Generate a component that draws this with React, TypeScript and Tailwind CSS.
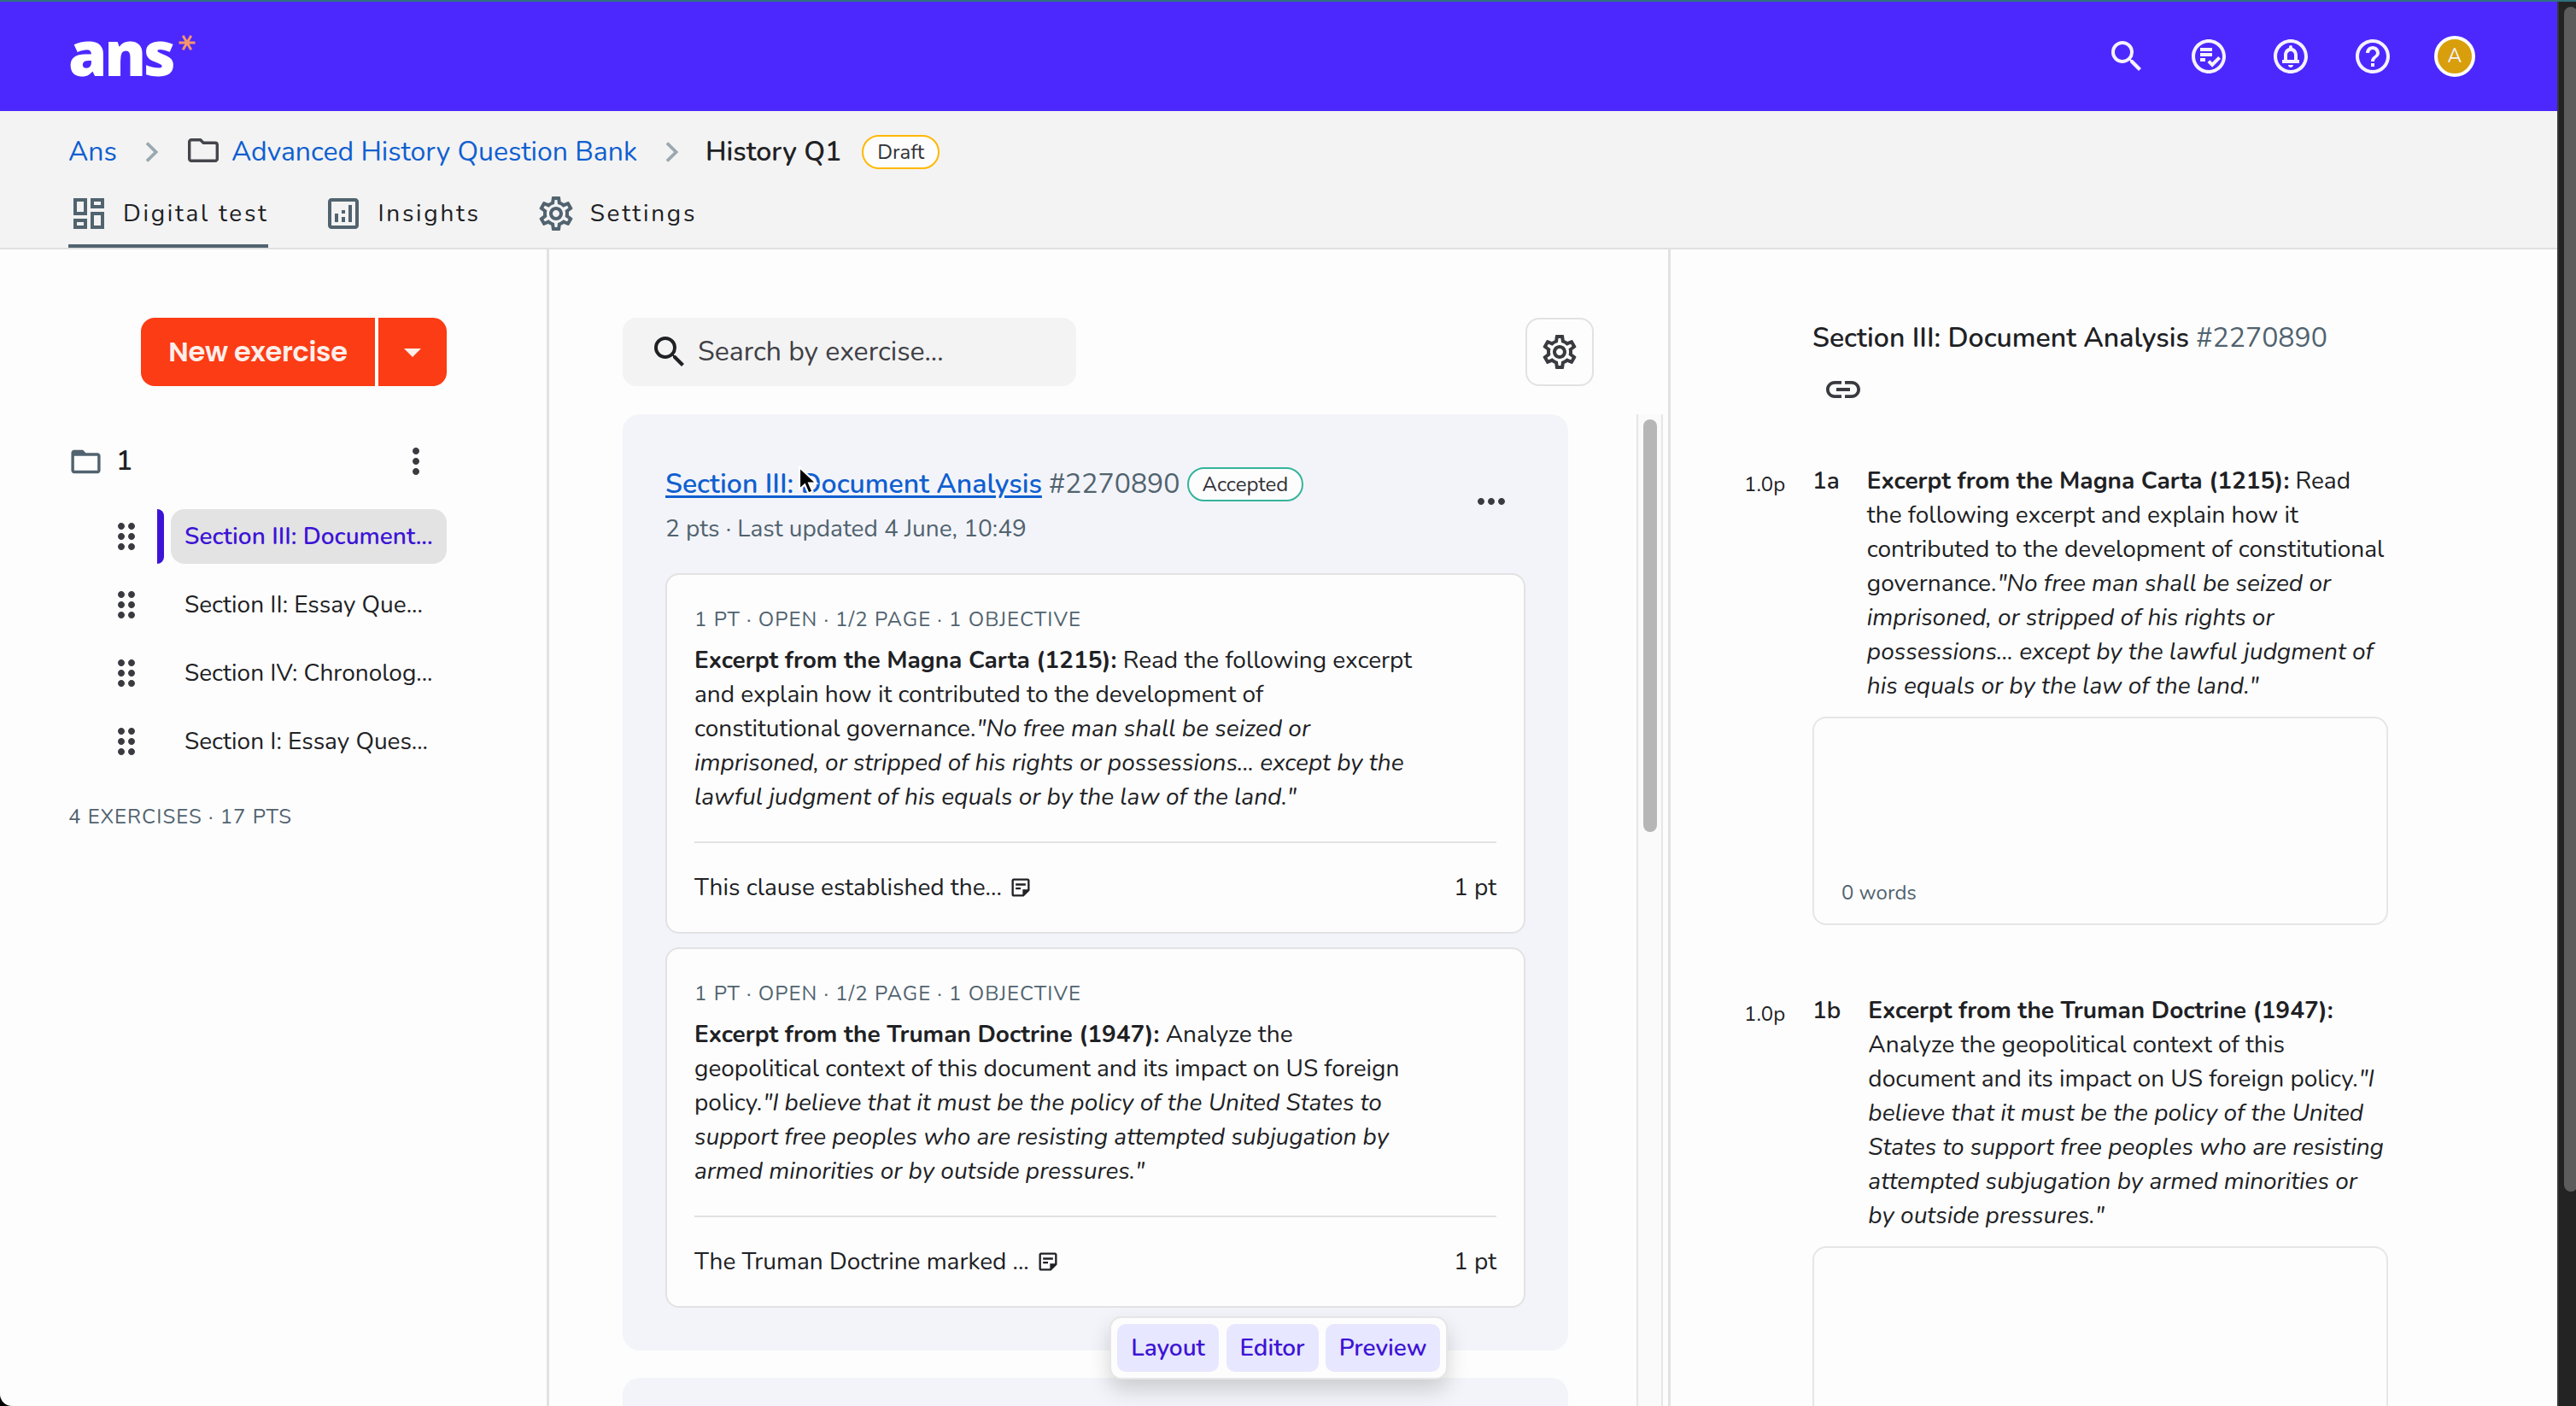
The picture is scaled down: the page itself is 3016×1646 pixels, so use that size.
import type { ReactNode } from "react";
import {
  MdArrowDropDown,
  MdDragIndicator,
  MdFolderOpen,
  MdHelpOutline,
  MdLink,
  MdMoreHoriz,
  MdMoreVert,
  MdOutlineAnalytics,
  MdOutlineCircleNotifications,
  MdOutlineDashboard,
  MdOutlinePlaylistAddCheckCircle,
  MdOutlineSettings,
  MdOutlineStickyNote2,
  MdSearch,
} from "react-icons/md";

const exercises = [
  { title: "Section III: Document...", active: true },
  { title: "Section II: Essay Que...", active: false },
  { title: "Section IV: Chronolog...", active: false },
  { title: "Section I: Essay Ques...", active: false },
];

const questions = [
  {
    label: "1a",
    heading: "Excerpt from the Magna Carta (1215):",
    body: "Read the following excerpt and explain how it contributed to the development of constitutional governance.",
    quote:
      '"No free man shall be seized or imprisoned, or stripped of his rights or possessions... except by the lawful judgment of his equals or by the law of the land."',
    objective: "This clause established the...",
  },
  {
    label: "1b",
    heading: "Excerpt from the Truman Doctrine (1947):",
    body: "Analyze the geopolitical context of this document and its impact on US foreign policy.",
    quote:
      '"I believe that it must be the policy of the United States to support free peoples who are resisting attempted subjugation by armed minorities or by outside pressures."',
    objective: "The Truman Doctrine marked ...",
  },
];

type Question = (typeof questions)[number];

export default function App() {
  return (
    <div className="bg-black">
      <div className="flex h-[1646px] w-[3016px] flex-col overflow-hidden rounded-bl-[14px] bg-[#fdfdfd] font-['Nunito','Lato',sans-serif] text-[28px] leading-[40px] text-[#202124]">
        <div className="h-[2px] shrink-0 bg-[#2f7080]" />
        <div className="flex min-h-0 flex-1">
          <div className="flex w-[2994px] shrink-0 flex-col">
            <Header />
            <SubHeader />
            <div className="flex min-h-0 flex-1">
              <Sidebar />
              <ExerciseColumn />
              <PreviewColumn />
            </div>
          </div>
          {/* Window scrollbar */}
          <div className="w-[22px] overflow-hidden border-l-2 border-[#37373a] bg-[#232324] pl-[6px] pt-[6px]">
            <div className="h-[1387px] w-[16px] rounded-full bg-[#5c5c5c]" />
          </div>
        </div>
      </div>
    </div>
  );
}

function Header() {
  return (
    <header className="flex h-[128px] shrink-0 items-center justify-between bg-[#4c28ff] pl-[80px] pr-[96px] text-[#f5f2ff]">
      <div className="flex items-start">
        <span className="-mt-[11px] font-['Noto_Sans',sans-serif] text-[73px] font-black leading-[80px] tracking-[-3.2px] text-white">
          ans
        </span>
        <svg viewBox="0 0 20 20" className="ml-[6px] mt-[8px] h-[20px] w-[20px]" stroke="#f5956b" strokeWidth="3">
          <path d="M0.5 10h19M5.2 1.8l9.6 16.4M14.8 1.8 5.2 18.2" />
        </svg>
      </div>
      <div className="flex items-center gap-12">
        <MdSearch size={48} />
        <MdOutlinePlaylistAddCheckCircle size={48} />
        <MdOutlineCircleNotifications size={48} />
        <MdHelpOutline size={48} />
        <div className="flex h-[48px] w-[48px] items-center justify-center rounded-full border-4 border-white bg-[#d99e0b] text-[23px]">
          A
        </div>
      </div>
    </header>
  );
}

function Chevron() {
  return (
    <svg viewBox="0 0 16 24" className="h-[24px] w-[16px]" fill="none" stroke="#9aa8b0" strokeWidth="3.8">
      <path d="M2 1.5 12.6 12 2 22.5" />
    </svg>
  );
}

function SubHeader() {
  return (
    <div className="h-[162px] shrink-0 border-b-2 border-[#e0e0e0] bg-[#f3f3f3] pl-[80px]">
      {/* Breadcrumbs */}
      <div className="mt-[24px] flex h-[48px] items-center text-[32px] leading-[48px]">
        <a className="text-[#0f5fd0]">Ans</a>
        <div className="ml-[33px]">
          <Chevron />
        </div>
        <svg
          viewBox="0 0 36 28"
          className="mb-[5px] ml-[34px] h-[28px] w-[36px]"
          fill="none"
          stroke="#45464c"
          strokeWidth="3.4"
        >
          <path d="M4 1.7h10.6l3.6 3.6H32a2.3 2.3 0 0 1 2.3 2.3V24a2.3 2.3 0 0 1-2.3 2.3H4A2.3 2.3 0 0 1 1.7 24V4A2.3 2.3 0 0 1 4 1.7z" />
        </svg>
        <a className="ml-[15px] text-[#0f5fd0]">Advanced History Question Bank</a>
        <div className="ml-[33px]">
          <Chevron />
        </div>
        <span className="ml-[31px] font-semibold">History Q1</span>
        <Badge className="ml-[24px] border-[#ffb800]">Draft</Badge>
      </div>
      {/* Tabs */}
      <div className="mt-[24px] flex gap-16 tracking-[2.7px]">
        <Tab icon={<MdOutlineDashboard size={48} />} label="Digital test" active />
        <Tab icon={<MdOutlineAnalytics size={48} />} label="Insights" />
        <Tab icon={<MdOutlineSettings size={48} />} label="Settings" />
      </div>
    </div>
  );
}

function Tab({ icon, label, active }: { icon: ReactNode; label: string; active?: boolean }) {
  return (
    <div className={`flex h-[64px] items-start gap-4 ${active ? "border-b-4 border-[#51636f]" : ""}`}>
      <span className="text-[#51636f]">{icon}</span>
      <span className="mt-[4px]">{label}</span>
    </div>
  );
}

function Badge({ children, className }: { children: ReactNode; className: string }) {
  return (
    <span
      className={`flex h-[40px] items-center rounded-full border-2 bg-[#fdfdfd] px-4 text-[24px] font-normal leading-[36px] text-[#303136] ${className}`}
    >
      {children}
    </span>
  );
}

function Sidebar() {
  return (
    <aside className="w-[643px] shrink-0 border-r-[3px] border-[#e2e2e2] pt-[80px]">
      <div className="ml-[165px] flex h-[80px] w-[358px] gap-[4px] overflow-hidden rounded-[16px] text-[#fdeeea]">
        <button className="w-[274px] bg-[#fb3c14] font-['Poppins','Inter',sans-serif] text-[32px] font-semibold tracking-[-0.3px]">
          New exercise
        </button>
        <button className="flex flex-1 items-center justify-center bg-[#fb3c14]">
          <MdArrowDropDown size={48} />
        </button>
      </div>

      <div className="ml-[80px] mt-[64px] flex h-[48px] w-[431px] items-center">
        <MdFolderOpen size={41} className="text-[#51636f]" />
        <span className="ml-[15px] text-[32px] font-semibold">1</span>
        <MdMoreVert size={48} className="ml-auto text-[#3a3b40]" />
      </div>

      <div className="mt-[32px] flex flex-col gap-4">
        {exercises.map((exercise) => (
          <div key={exercise.title} className="ml-[124px] flex h-[64px] items-center">
            <MdDragIndicator size={48} className="text-[#3a3b40]" />
            <div className={`ml-[12px] h-[64px] w-[8px] rounded-r-[8px] ${exercise.active ? "bg-[#3d14d6]" : ""}`} />
            <div
              className={`ml-2 flex h-[64px] w-[323px] items-center whitespace-nowrap rounded-[16px] pl-4 ${
                exercise.active ? "bg-[#e3e3e3] font-semibold text-[#3d14d6]" : ""
              }`}
            >
              {exercise.title}
            </div>
          </div>
        ))}
      </div>

      <div className="ml-[80px] mt-[38px] text-[24px] leading-[36px] tracking-[1.02px] text-[#51636f]">
        4 EXERCISES · 17 PTS
      </div>
    </aside>
  );
}

function ExerciseColumn() {
  return (
    <main className="relative flex w-[1313px] shrink-0 flex-col border-r-[3px] border-[#e2e2e2] pl-[86px] pt-[80px]">
      <div className="flex w-[1137px] shrink-0 justify-between">
        <div className="flex h-[80px] w-[531px] items-center rounded-[16px] bg-[#f3f3f3] pl-[31px] text-[32px] text-[#3f4046]">
          <MdSearch size={48} className="text-[#202124]" />
          <span className="ml-[9px]">Search by exercise...</span>
        </div>
        <button className="flex h-[80px] w-[80px] items-center justify-center rounded-[16px] border-2 border-[#e2e2e2] text-[#3a3b40]">
          <MdOutlineSettings size={48} />
        </button>
      </div>

      <div className="mt-[33px] flex min-h-0 flex-1 justify-between pr-[6px]">
        <div className="flex w-[1107px] flex-col gap-8 overflow-hidden">
          <section className="shrink-0 rounded-[20px] bg-[#f3f4f9] px-[50px] pb-[50px] pt-[58px]">
            <div className="flex items-center justify-between text-[#51636f]">
              <div>
                <div className="flex items-center text-[32px] leading-[48px]">
                  <a className="font-semibold text-[#0f5fd0] underline decoration-[3px] underline-offset-[3px]">
                    Section III: Document Analysis
                  </a>
                  <span className="ml-[8px]">#2270890</span>
                  <Badge className="ml-[8px] border-[#35b39c]">Accepted</Badge>
                </div>
                <div className="mt-[8px]">2 pts · Last updated 4 June, 10:49</div>
              </div>
              <MdMoreHoriz size={48} className="-mt-[8px] mr-[16px] text-[#3a3b40]" />
            </div>
            <div className="mt-8 flex flex-col gap-4">
              {questions.map((question) => (
                <QuestionCard key={question.label} question={question} />
              ))}
            </div>
          </section>
          <section className="h-[200px] shrink-0 rounded-[20px] bg-[#f3f4f9]" />
        </div>
        {/* List scrollbar */}
        <div className="w-[31px] border-x-2 border-[#e6e6e6] bg-[#fafafa] pl-[6px] pt-[6px]">
          <div className="h-[483px] w-[16px] rounded-full bg-[#b6b6b6]" />
        </div>
      </div>

      {/* Floating view switcher */}
      <div className="absolute left-[656px] top-[1249px] flex h-[74px] w-[396px] items-center justify-between rounded-[14px] border-2 border-[#e6e6e6] bg-[#fdfdfd] px-[7px] font-semibold text-[#3d14d6] shadow-[0_12px_24px_rgba(0,0,0,0.16)]">
        <div className="flex h-[56px] w-[119px] items-center justify-center rounded-[10px] bg-[#e7e7ff]">Layout</div>
        <div className="flex h-[56px] w-[108px] items-center justify-center rounded-[10px] bg-[#e7e7ff]">Editor</div>
        <div className="flex h-[56px] w-[134px] items-center justify-center rounded-[10px] bg-[#e7e7ff]">Preview</div>
      </div>

      {/* Mouse pointer */}
      <svg viewBox="0 0 26 38" className="absolute left-[291px] top-[252px] h-[38px] w-[26px]">
        <path d="M2 3v26l6.2-5.6 4.3 10.2 5-2.2-4.3-9.8H22z" fill="#000" stroke="#fff" strokeWidth="2.2" />
      </svg>
    </main>
  );
}

function QuestionText({ question }: { question: Question }) {
  return (
    <>
      <b className="font-bold">{question.heading}</b> {question.body}
      <i className="ml-px">{question.quote}</i>
    </>
  );
}

function QuestionCard({ question }: { question: Question }) {
  return (
    <div className="rounded-[16px] border-2 border-[#e2e2e4] bg-[#fdfdfd] p-8">
      <div className="text-[24px] tracking-[1.02px] text-[#51636f]">1 PT · OPEN · 1/2 PAGE · 1 OBJECTIVE</div>
      <p className="mt-2 w-[843px]">
        <QuestionText question={question} />
      </p>
      <div className="mt-8 flex items-center border-t-2 border-[#e2e2e2] pt-8">
        <span>{question.objective}</span>
        <MdOutlineStickyNote2 size={28} className="ml-[8px]" />
        <span className="ml-auto">1 pt</span>
      </div>
    </div>
  );
}

function PreviewColumn() {
  return (
    <aside className="flex-1 overflow-hidden pl-[86px] pt-[80px]">
      <h2 className="ml-[80px] text-[32px] font-semibold leading-[48px]">
        Section III: Document Analysis <span className="font-normal text-[#51636f]">#2270890</span>
      </h2>
      <MdLink size={48} className="ml-[92px] mt-[12px] text-[#3a3b40]" />
      <div className="mt-[63px] flex flex-col gap-20">
        {questions.map((question) => (
          <div key={question.label} className="flex">
            <div className="mt-[4px] w-[80px] text-[24px]">1.0p</div>
            <div className="w-[674px]">
              <div className="flex">
                <span className="font-semibold">{question.label}</span>
                <p className="ml-[32px] w-[610px] shrink-0">
                  <QuestionText question={question} />
                </p>
              </div>
              <div className="mt-4 flex h-[244px] items-end rounded-[16px] border-2 border-[#e6e6e6] pb-[16px] pl-[32px] text-[24px] text-[#51636f]">
                0 words
              </div>
            </div>
          </div>
        ))}
      </div>
    </aside>
  );
}
